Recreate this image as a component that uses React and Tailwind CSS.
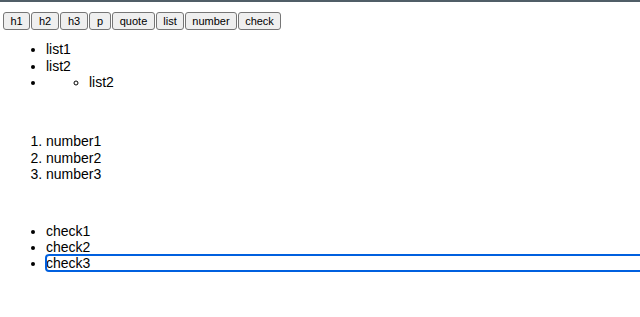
export default function App() {
  const buttons = [
    ["h1", "w-[27px]"],
    ["h2", "w-[28px]"],
    ["h3", "w-[28px]"],
    ["p", "w-[22px]"],
    ["quote", "w-[43px]"],
    ["list", "w-[28px]"],
    ["number", "w-[52px]"],
    ["check", "w-[43px]"],
  ];
  return (
    <div className="w-[640px] h-[317px] overflow-hidden bg-white border-t-2 border-[#505e67] text-black font-['Liberation_Sans',Arial,sans-serif] text-[14px]">
      <div className="flex gap-[1px] pl-[3px] pt-[10px]">
        {buttons.map(([label, w]) => (
          <button
            key={label}
            className={`${w} h-[18px] flex items-center justify-center border border-[#767676] bg-[#efefef] rounded-[3px] text-[11px] leading-none text-black`}
          >
            {label}
          </button>
        ))}
      </div>
      <ul className="list-disc pl-[46px] mt-[11px] leading-[16.5px]">
        <li>list1</li>
        <li>list2</li>
        <li>
          <ul className="list-[circle] pl-[43px]">
            <li>list2</li>
          </ul>
        </li>
      </ul>
      <ol className="list-decimal pl-[46px] mt-[42.5px] leading-[16.5px]">
        <li>number1</li>
        <li>number2</li>
        <li>number3</li>
      </ol>
      <ul className="list-disc pl-[46px] mt-[40.5px] leading-[16px]">
        <li>check1</li>
        <li>check2</li>
        <li>
          <div className="w-[640px] outline-2 outline-[#0060df] outline-offset-[-1px] rounded-[3px]">check3</div>
        </li>
      </ul>
    </div>
  );
}
